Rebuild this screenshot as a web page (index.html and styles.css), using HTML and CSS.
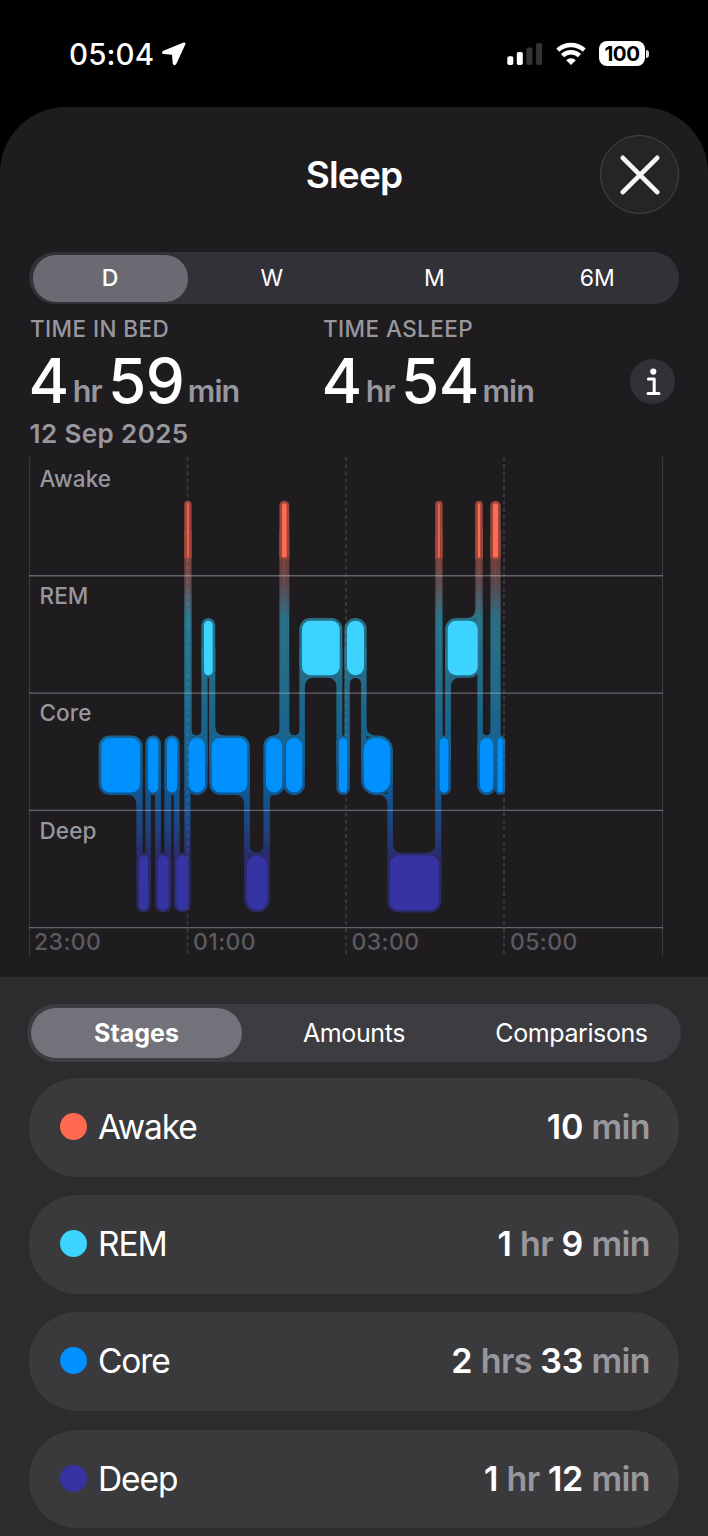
FILE: index.html
```html
<!DOCTYPE html>
<html lang="en">
<head>
  <meta charset="UTF-8">
  <title>Sleep</title>
  <link rel="stylesheet" href="styles.css">
</head>
<body>

<div class="status-bar">
  <div class="status-left">
    <span class="clock">05:04</span>
    <svg class="location" width="26" height="26" viewBox="0 0 26 26">
      <path d="M22.6 1.6 2.4 9.7c-2 .9-1.7 3.2.4 3.4l8.2.6.7 8.6c.2 2.2 2.8 2.5 3.7.5L24.4 3.2c.5-1.2-.6-2.1-1.8-1.6z"/>
    </svg>
  </div>
  <div class="status-right">
    <svg width="36" height="24" viewBox="0 0 36 24">
      <rect x="0.3" y="14.3" width="6" height="8.7" rx="1.8" fill="#fff"/>
      <rect x="9.8" y="10" width="6" height="13" rx="1.8" fill="#fff"/>
      <rect x="19.4" y="5.6" width="6" height="17.4" rx="1.8" fill="#333"/>
      <rect x="29.1" y="1" width="6" height="22" rx="1.8" fill="#333"/>
    </svg>
    <svg class="wifi" width="32" height="24" viewBox="0 0 32 24">
      <path d="M2.8 8.2a19.2 19.2 0 0 1 26.4 0M7.5 13.6a12.3 12.3 0 0 1 17 0" fill="none" stroke="#fff" stroke-width="4.4"/>
      <path d="M16 23l-4.8-4.8a7 7 0 0 1 9.6 0z" fill="#fff"/>
    </svg>
    <div class="battery">100</div>
    <div class="battery-tip"></div>
  </div>
</div>

<div class="sheet">
  <header class="sheet-header">
    <h1>Sleep</h1>
    <button class="close" aria-label="Close">
      <svg width="40" height="40" viewBox="0 0 40 40">
        <path d="M2.8 2.8 37.2 37.2M37.2 2.8 2.8 37.2" stroke="#f4f4f6" stroke-width="4.6" stroke-linecap="round"/>
      </svg>
    </button>
  </header>

  <nav class="range">
    <span class="range-item active">D</span>
    <span class="range-item">W</span>
    <span class="range-item">M</span>
    <span class="range-item">6M</span>
  </nav>

  <div class="summary">
    <div class="stat">
      <div class="stat-label">TIME IN BED</div>
      <div class="stat-value">4<small>hr</small><b>59</b><small>min</small></div>
    </div>
    <div class="stat">
      <div class="stat-label">TIME ASLEEP</div>
      <div class="stat-value">4<small>hr</small><b>54</b><small>min</small></div>
    </div>
    <div class="info">
      <svg width="16" height="30" viewBox="0 0 16 30">
        <circle cx="8.3" cy="4.6" r="3.1" fill="#fff"/>
        <path d="M3.4 12h5.8v14M3 26.4h11" fill="none" stroke="#fff" stroke-width="3" stroke-linecap="round" stroke-linejoin="round"/>
      </svg>
    </div>
  </div>
  <div class="date">12 Sep 2025</div>

  <svg class="chart" width="708" height="527" viewBox="0 450 708 527">
    <defs>
      <linearGradient id="stageFade" gradientUnits="userSpaceOnUse" x1="0" y1="501" x2="0" y2="913">
        <stop offset="0" stop-color="#ff6a50" stop-opacity="1"/>
        <stop offset="0.138" stop-color="#ff6a50" stop-opacity="1"/>
        <stop offset="0.14" stop-color="#e0685a" stop-opacity="0.8"/>
        <stop offset="0.2" stop-color="#a87f84" stop-opacity="0.8"/>
        <stop offset="0.285" stop-color="#36c4ea" stop-opacity="0.92"/>
        <stop offset="0.43" stop-color="#28b4e8" stop-opacity="0.95"/>
        <stop offset="0.58" stop-color="#12a0f0"/>
        <stop offset="0.71" stop-color="#0b86ee"/>
        <stop offset="0.8" stop-color="#2160cc"/>
        <stop offset="0.87" stop-color="#3634a3"/>
        <stop offset="1" stop-color="#3634a3"/>
      </linearGradient>
    </defs>
    <g id="halo" fill="url(#stageFade)" opacity="0.54"></g>
    <g class="grid-edge">
      <path d="M29.5 457V956M662.5 457V956"/>
    </g>
    <g class="grid-dash">
      <path d="M187.5 457V956M346 457V956M504 457V956"/>
    </g>
    <g class="grid-row">
      <path d="M29 575.7H663M29 693.1H663M29 810.4H663M29 927.6H663"/>
    </g>
    <g id="blocks"></g>
    <g class="row-label">
      <text x="39.5" y="486.7">Awake</text>
      <text x="39.5" y="604">REM</text>
      <text x="39.5" y="721.2">Core</text>
      <text x="39.5" y="838.5">Deep</text>
    </g>
    <g class="time-label">
      <text x="34" y="949.8">23:00</text>
      <text x="193" y="949.8">01:00</text>
      <text x="351.5" y="949.8">03:00</text>
      <text x="510" y="949.8">05:00</text>
    </g>
  </svg>
</div>

<section class="details">
  <nav class="tabs">
    <span class="tab active">Stages</span>
    <span class="tab">Amounts</span>
    <span class="tab">Comparisons</span>
  </nav>

  <ul class="stages">
    <li><i class="dot awake"></i><span class="name">Awake</span><span class="amount">10 <em>min</em></span></li>
    <li><i class="dot rem"></i><span class="name">REM</span><span class="amount">1 <em>hr</em> 9 <em>min</em></span></li>
    <li><i class="dot core"></i><span class="name">Core</span><span class="amount">2 <em>hrs</em> 33 <em>min</em></span></li>
    <li><i class="dot deep"></i><span class="name">Deep</span><span class="amount">1 <em>hr</em> 12 <em>min</em></span></li>
  </ul>
</section>

<script src="script.js"></script>
</body>
</html>
```

FILE: styles.css
```css
* {
  box-sizing: border-box;
}

body {
  margin: 0;
  width: 708px;
  height: 1536px;
  overflow: hidden;
  background: #000;
  color: #fff;
  font-family: Inter, "Liberation Sans", sans-serif;
}

.status-bar {
  height: 107px;
  padding: 0 59px 0 69px;
  display: flex;
  justify-content: space-between;
  align-items: center;
}

.status-left,
.status-right {
  display: flex;
  align-items: center;
}

.clock {
  font-size: 29.5px;
  font-weight: 500;
  line-height: 36px;
  letter-spacing: 0.1px;
}

.location {
  margin-left: 7px;
  fill: #fff;
}

.wifi {
  margin-left: 12px;
}

.battery {
  width: 46px;
  height: 25px;
  margin-left: 12px;
  border-radius: 8px;
  background: #fff;
  color: #000;
  font-size: 20.5px;
  font-weight: 700;
  line-height: 25px;
  letter-spacing: -0.5px;
  text-align: center;
}

.battery-tip {
  width: 3px;
  height: 8px;
  margin-left: 1px;
  border-radius: 0 3px 3px 0;
  background: #ddd;
}

.sheet {
  height: 870px;
  background: #1e1c1f;
  border-radius: 66px 66px 0 0;
}

.sheet-header {
  height: 145px;
  padding: 28px 29px 0 108px;
  display: flex;
  align-items: flex-start;
}

h1 {
  flex: 1;
  margin: 0;
  font-size: 37px;
  font-weight: 600;
  line-height: 80px;
  letter-spacing: -0.8px;
  text-align: center;
}

.close {
  width: 79px;
  height: 79px;
  padding: 0;
  border: 1.5px solid #47464b;
  border-radius: 50%;
  background: #252527;
  display: flex;
  align-items: center;
  justify-content: center;
}

.range {
  height: 52px;
  margin: 0 29px;
  padding: 3px 3.5px;
  border-radius: 26px;
  background: #323137;
  display: grid;
  grid-template-columns: 155px 1fr 1fr 1fr;
  column-gap: 6px;
}

.range-item {
  border-radius: 23px;
  font-size: 23px;
  font-weight: 400;
  line-height: 47px;
  text-align: center;
}

.range-item.active {
  background: #6b6972;
  font-weight: 500;
}

.summary {
  height: 108px;
  padding: 11px 33px 0 30px;
  display: flex;
}

.stat {
  width: 293px;
}

.stat-label {
  font-size: 22.5px;
  font-weight: 500;
  line-height: 27px;
  letter-spacing: 0.4px;
  color: #98979d;
}

.stat-value {
  margin-left: -1.5px;
  font-size: 62px;
  font-weight: 500;
  line-height: 77px;
  white-space: nowrap;
}

.stat-value b {
  font-weight: 500;
  letter-spacing: -0.5px;
}

.stat-value small {
  margin: 0 6px 0 3.5px;
  position: relative;
  top: -1px;
  font-size: 30.5px;
  font-weight: 600;
  letter-spacing: -0.8px;
  color: #98979d;
}

.info {
  width: 45px;
  height: 45px;
  margin: 44px 0 0 auto;
  border-radius: 50%;
  background: #323138;
  display: flex;
  align-items: center;
  justify-content: center;
}

.date {
  height: 38px;
  padding: 2px 0 0 29.5px;
  font-size: 26px;
  font-weight: 600;
  line-height: 39px;
  letter-spacing: 0.4px;
  color: #98979d;
}

.chart {
  display: block;
}

.grid-edge {
  stroke: #39383c;
  stroke-width: 1.2;
}

.grid-dash {
  stroke: #8a8a92;
  stroke-opacity: 0.3;
  stroke-width: 1.6;
  stroke-dasharray: 4 3.25;
}

.grid-row {
  stroke: #d0d0dc;
  stroke-opacity: 0.4;
  stroke-width: 1.4;
}

.row-label {
  font-size: 22.5px;
  font-weight: 500;
  letter-spacing: 0.1px;
  fill: #98979d;
}

.time-label {
  font-size: 23px;
  font-weight: 500;
  letter-spacing: 0.4px;
  fill: #5b5a5f;
}

.details {
  height: 559px;
  padding-top: 27px;
  background: #2c2c2e;
}

.tabs {
  height: 58px;
  margin: 0 27px;
  padding: 4px;
  border-radius: 29px;
  background: #3d3c41;
  display: grid;
  grid-template-columns: 211px 1fr 1fr;
  column-gap: 6.5px;
}

.tab {
  border-radius: 25px;
  font-size: 25px;
  line-height: 50px;
  letter-spacing: -0.4px;
  text-align: center;
}

.tab.active {
  background: #737179;
  font-weight: 700;
  letter-spacing: 0;
}

.stages {
  margin: 16px 29px 0;
  padding: 0;
  list-style: none;
  display: flex;
  flex-direction: column;
  gap: 18.6px;
}

.stages li {
  height: 98.6px;
  padding: 0 29px 1.6px 31px;
  border-radius: 48px;
  background: #3a3a3c;
  display: flex;
  align-items: center;
  font-size: 34px;
}

.dot {
  width: 27px;
  height: 27px;
  margin-right: 11px;
  border-radius: 50%;
}

.dot.awake { background: #ff6a50; }
.dot.rem { background: #3cd3fe; }
.dot.core { background: #0091ff; }
.dot.deep { background: #3634a3; }

.name {
  flex: 1;
  padding-top: 1px;
  font-size: 33.5px;
  letter-spacing: -1.1px;
}

.amount {
  font-weight: 600;
  letter-spacing: -0.2px;
}

.amount em {
  font-style: normal;
  letter-spacing: -0.6px;
  color: #98979d;
}
```

FILE: script.js
```js
const stages = {
  awake: { top: 503.3, color: '#ff6a50' },
  rem:   { top: 620.7, color: '#3cd3fe' },
  core:  { top: 738,   color: '#0091ff' },
  deep:  { top: 855.4, color: '#3634a3' }
};

// stage, start x, end x
const night = [
  ['core', 101.3, 140], ['deep', 139, 148.2], ['core', 148, 158.3],
  ['deep', 157.7, 168.7], ['core', 167, 177], ['deep', 176.3, 188],
  ['awake', 186.8, 189], ['core', 188.7, 205], ['rem', 204, 212.7],
  ['core', 211.7, 247.3], ['deep', 246.7, 267.3], ['core', 266, 282.3],
  ['awake', 282, 286.7], ['core', 286, 302.3], ['rem', 302, 339.7],
  ['core', 339, 347.3], ['rem', 347, 364], ['core', 363.7, 390.3],
  ['deep', 390, 438.7], ['awake', 437.8, 440], ['core', 439.7, 448.3],
  ['rem', 447.7, 477.7], ['awake', 477.8, 480.2], ['core', 480, 493.3],
  ['awake', 493, 498], ['core', 497.7, 502.7]
];

const blockHeight = 54.5;
const pad = 2.6;
const halo = document.getElementById('halo');
const blocks = document.getElementById('blocks');

function add(parent, tag, attrs) {
  const el = document.createElementNS('http://www.w3.org/2000/svg', tag);
  for (const key in attrs) el.setAttribute(key, attrs[key]);
  parent.appendChild(el);
}

// inner corner between a connector and a block, dx/dy point away from both
function fillet(x, y, dx, dy, r) {
  const sweep = dx * dy > 0 ? 1 : 0;
  add(halo, 'path', {
    d: `M${x} ${y + dy * r}A${r} ${r} 0 0 ${sweep} ${x + dx * r} ${y}V${y - dy}H${x - dx}V${y + dy * r}Z`
  });
}

night.forEach(([stage, left, right], i) => {
  const { top, color } = stages[stage];
  const width = right - left;
  const radius = width < 28 ? Math.min(width / 2, 12) : 8.5;
  const bottom = top + blockHeight;

  add(blocks, 'rect', {
    x: left, y: top, width, height: blockHeight, rx: radius, fill: color,
    opacity: width < 2.3 ? 0.75 : 1
  });
  add(halo, 'rect', {
    x: left - pad, y: top - pad, width: width + pad * 2,
    height: blockHeight + pad * 2, rx: radius + pad
  });

  const prev = night[i - 1];
  const next = night[i + 1];

  if (next) {
    const a = top + blockHeight / 2;
    const b = stages[next[0]].top + blockHeight / 2;
    add(halo, 'rect', {
      x: next[1] - pad, y: Math.min(a, b),
      width: right - next[1] + pad * 2, height: Math.abs(a - b)
    });
  }

  for (const dir of [-1, 1]) {
    const y = dir < 0 ? top - pad : bottom + pad;
    const enters = prev && Math.sign(stages[prev[0]].top - top) === dir;
    const exits = next && Math.sign(stages[next[0]].top - top) === dir;
    const from = enters ? prev[2] + pad : left + radius;
    const to = exits ? next[1] - pad : right - radius;
    const r = Math.min(8, enters && exits ? (to - from) / 2 : to - from);
    if (r < 2.5) continue;
    if (enters) fillet(from, y, 1, dir, r);
    if (exits) fillet(to, y, -1, dir, r);
  }
});
```
